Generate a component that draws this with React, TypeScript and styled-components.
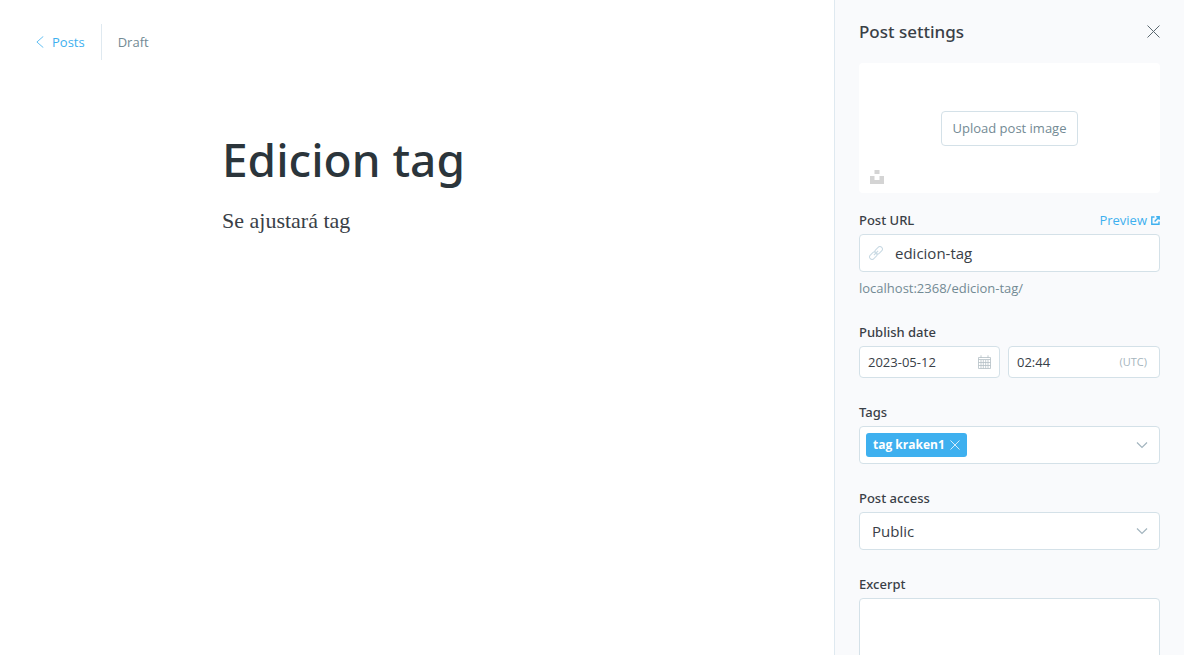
import React, { useState } from 'react';
import styled, { createGlobalStyle } from 'styled-components';

const sans = '"Segoe UI", "Open Sans", "Noto Sans", sans-serif';
const heading = '"Segoe UI", "Noto Sans", "Open Sans", sans-serif';
const serif = 'Georgia, "Liberation Serif", serif';

const ink = '#394047';
const muted = '#738a94';
const blue = '#3eb0ef';
const line = '#d4e1e8';

const GlobalStyle = createGlobalStyle`
  *, *::before, *::after { box-sizing: border-box; }
  body {
    margin: 0;
    background: #fff;
    color: ${ink};
    font-family: ${sans};
    font-size: 13px;
    line-height: 20px;
  }
  button, input, select, textarea { font: inherit; color: inherit; }
`;

const Page = styled.div`
  display: flex;
  height: 100vh;
`;

const Editor = styled.main`
  flex: 1;
  min-width: 0;
  overflow-y: auto;
`;

const TopBar = styled.header`
  display: flex;
  align-items: center;
  padding: 24px 36px;
`;

const BackLink = styled.a`
  display: flex;
  align-items: center;
  gap: 8px;
  height: 36px;
  padding-right: 16px;
  border-right: 1px solid #dfe9f0;
  color: ${blue};
  text-decoration: none;
`;

const Status = styled.span`
  padding-left: 16px;
  color: ${muted};
`;

const Article = styled.article`
  padding: 45px 24px 24px max(24px, calc(50vw - 370px));
`;

const Title = styled.h1`
  margin: 0;
  color: #2b353b;
  font-family: ${heading};
  font-size: 46px;
  font-weight: 500;
  line-height: 60px;
`;

const Body = styled.p`
  margin: 16px 0 0;
  font-family: ${serif};
  font-size: 22px;
  line-height: 32px;
`;

const Panel = styled.aside`
  flex: none;
  width: 350px;
  padding: 0 24px 24px;
  border-left: 1px solid #dfe9f0;
  background: #f9fafc;
  overflow-y: auto;
  scrollbar-width: none;
`;

const PanelHeader = styled.div`
  display: flex;
  align-items: center;
  justify-content: space-between;
  height: 63px;
`;

const PanelTitle = styled.h2`
  margin: 0;
  font-family: ${heading};
  font-size: 17px;
  font-weight: 500;
  line-height: 24px;
`;

const IconButton = styled.button`
  display: flex;
  padding: 0;
  border: 0;
  background: none;
  cursor: pointer;
`;

const ImageDrop = styled.div`
  position: relative;
  display: flex;
  align-items: center;
  justify-content: center;
  height: 130px;
  margin-bottom: 17px;
  border-radius: 4px;
  background: #fff;
`;

const UploadButton = styled.button`
  height: 35px;
  padding: 0 11px;
  border: 1px solid ${line};
  border-radius: 4px;
  background: #fff;
  color: ${muted};
  cursor: pointer;
`;

const UnsplashButton = styled(IconButton)`
  position: absolute;
  left: 11px;
  bottom: 9px;
`;

const Form = styled.form`
  display: flex;
  flex-direction: column;
  gap: 24px;
`;

const Field = styled.div`
  display: flex;
  flex-direction: column;
  gap: 4px;
`;

const LabelRow = styled.div`
  display: flex;
  justify-content: space-between;
`;

const Label = styled.label`
  font-family: ${heading};
  font-size: 13px;
  font-weight: 500;
`;

const PreviewLink = styled.a`
  display: flex;
  align-items: center;
  gap: 4px;
  color: ${blue};
  text-decoration: none;
`;

const Control = styled.div<{ $small?: boolean }>`
  display: flex;
  align-items: center;
  gap: ${p => (p.$small ? 4 : 12)}px;
  height: ${p => (p.$small ? 32 : 38)}px;
  padding: 0 ${p => (p.$small ? 8 : 9)}px;
  border: 1px solid ${line};
  border-radius: 4px;
  background: #fff;
  font-size: ${p => (p.$small ? 13 : 15)}px;
`;

const TagControl = styled(Control)`
  padding: 0 11px 0 6px;
`;

const TextInput = styled.input`
  flex: 1;
  min-width: 0;
  width: 0;
  padding: 0;
  border: 0;
  outline: 0;
  background: none;
`;

const Hint = styled.p`
  margin: 2px 0 0;
  color: ${muted};
`;

const DateRow = styled.div`
  display: grid;
  grid-template-columns: 141fr 152fr;
  gap: 8px;
`;

const Zone = styled.span`
  padding-right: 4px;
  color: #a6b5bd;
  font-size: 11px;
`;

const Chip = styled.span`
  display: flex;
  align-items: center;
  gap: 5px;
  height: 24px;
  padding: 0 7px;
  border-radius: 3px;
  background: ${blue};
  color: #fff;
  font-size: 12px;
  font-weight: 700;
`;

const SelectWrap = styled.div`
  display: grid;
  align-items: center;

  > * { grid-area: 1 / 1; }
  > svg { justify-self: end; margin-right: 12px; pointer-events: none; }
`;

const Select = styled.select`
  width: 100%;
  height: 38px;
  padding: 0 12px;
  border: 1px solid ${line};
  border-radius: 4px;
  background: #fff;
  font-size: 15px;
  appearance: none;
`;

const TextArea = styled.textarea`
  display: block;
  width: 100%;
  height: 108px;
  padding: 8px 12px;
  border: 1px solid ${line};
  border-radius: 4px;
  background: #fff;
  font-size: 15px;
  resize: none;
`;

const Cross = ({ size, color }: { size: number; color: string }) => (
  <svg width={size} height={size} viewBox={`0 0 ${size} ${size}`} fill="none" stroke={color} aria-hidden="true">
    <path d={`M.5.5L${size - 0.5} ${size - 0.5}M${size - 0.5}.5L.5 ${size - 0.5}`} />
  </svg>
);

const ChevronDown = () => (
  <svg width="12" height="8" viewBox="0 0 12 8" fill="none" stroke="#a3b5bf" strokeWidth="1.2" aria-hidden="true">
    <path d="M1 1.500l5 5 5-5" />
  </svg>
);

const ChevronLeft = () => (
  <svg width="8" height="12" viewBox="0 0 8 12" fill="none" stroke={blue} strokeWidth="0.8" aria-hidden="true">
    <path d="M7.300.400L.900 6l6.400 5.600" />
  </svg>
);

const UnsplashMark = () => (
  <svg width="14" height="14" viewBox="0 0 14 14" fill="#d4d4d4" aria-hidden="true">
    <path d="M4.500 0h5v4h-5zM0 6h4.500v4h5V6H14v8H0z" />
  </svg>
);

const LinkIcon = () => (
  <svg width="14" height="14" viewBox="0 0 14 14" fill="none" stroke="#c8d9e3" strokeWidth="1" aria-hidden="true">
    <g transform="rotate(-45 7 7)">
      <rect x="-1" y="4.500" width="8.500" height="5" rx="2.500" />
      <rect x="6.500" y="4.500" width="8.500" height="5" rx="2.500" />
      <path d="M4 7h6" />
    </g>
  </svg>
);

const ExternalIcon = () => (
  <svg width="9" height="9" viewBox="0 0 9 9" fill="none" stroke={blue} strokeWidth="1.4" aria-hidden="true">
    <path d="M3.500 1H.8v7.200h7.200V5.600M3.600 5.400L7.800 1.200M5.200.8h3v3" />
  </svg>
);

const CalendarIcon = () => (
  <svg width="13" height="14" viewBox="0 0 13 14" fill="none" stroke="#b4bfc5" strokeWidth="0.8" aria-hidden="true">
    <path d="M.5 2.500h12v11H.5zM.5 4.500h12M3 .3v2.600M10 .3v2.600M3 5v8.500M5.300 5v8.500M7.700 5v8.500M10 5v8.500M.5 7.500h12M.5 10.500h12" />
  </svg>
);

export default function App() {
  const [slug, setSlug] = useState('edicion-tag');
  const [date, setDate] = useState('2023-05-12');
  const [time, setTime] = useState('02:44');
  const [tags, setTags] = useState(['tag kraken1']);

  return (
    <>
      <GlobalStyle />
      <Page>
        <Editor>
          <TopBar>
            <BackLink href="#posts"><ChevronLeft />Posts</BackLink>
            <Status>Draft</Status>
          </TopBar>
          <Article>
            <Title>Edicion tag</Title>
            <Body>Se ajustará tag</Body>
          </Article>
        </Editor>
        <Panel>
          <PanelHeader>
            <PanelTitle>Post settings</PanelTitle>
            <IconButton type="button" aria-label="Close"><Cross size={13} color="#5b6870" /></IconButton>
          </PanelHeader>
          <ImageDrop>
            <UploadButton type="button">Upload post image</UploadButton>
            <UnsplashButton type="button" aria-label="Unsplash"><UnsplashMark /></UnsplashButton>
          </ImageDrop>
          <Form>
            <Field>
              <LabelRow>
                <Label htmlFor="url">Post URL</Label>
                <PreviewLink href="#preview">Preview<ExternalIcon /></PreviewLink>
              </LabelRow>
              <Control>
                <LinkIcon />
                <TextInput id="url" value={slug} onChange={e => setSlug(e.target.value)} />
              </Control>
              <Hint>localhost:2368/{slug}/</Hint>
            </Field>
            <Field>
              <Label htmlFor="date">Publish date</Label>
              <DateRow>
                <Control $small>
                  <TextInput id="date" value={date} onChange={e => setDate(e.target.value)} />
                  <CalendarIcon />
                </Control>
                <Control $small>
                  <TextInput aria-label="Publish time" value={time} onChange={e => setTime(e.target.value)} />
                  <Zone>(UTC)</Zone>
                </Control>
              </DateRow>
            </Field>
            <Field>
              <Label htmlFor="tags">Tags</Label>
              <TagControl>
                {tags.map(tag => (
                  <Chip key={tag}>
                    {tag}
                    <IconButton type="button" aria-label={`Remove ${tag}`} onClick={() => setTags(tags.filter(t => t !== tag))}>
                      <Cross size={10} color="#d3ecfb" />
                    </IconButton>
                  </Chip>
                ))}
                <TextInput id="tags" />
                <ChevronDown />
              </TagControl>
            </Field>
            <Field>
              <Label htmlFor="access">Post access</Label>
              <SelectWrap>
                <Select id="access" defaultValue="Public">
                  <option>Public</option>
                </Select>
                <ChevronDown />
              </SelectWrap>
            </Field>
            <Field>
              <Label htmlFor="excerpt">Excerpt</Label>
              <TextArea id="excerpt" />
            </Field>
          </Form>
        </Panel>
      </Page>
    </>
  );
}
